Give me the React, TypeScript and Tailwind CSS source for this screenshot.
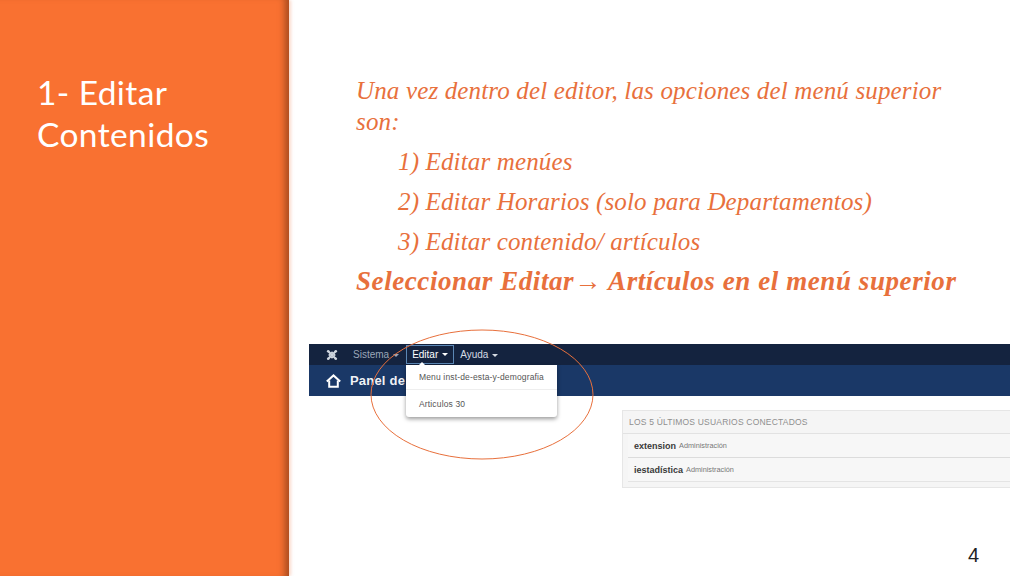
import React from "react";

const serif = "font-['Liberation_Serif',serif] italic text-[#e8703c]";
const ui = "font-['Liberation_Sans',sans-serif]";

function Caret({ cls }: { cls: string }) {
  return <span className={`inline-block w-0 h-0 ml-1 align-middle border-x-[3px] border-x-transparent border-t-[3px] ${cls}`} />;
}

function JoomlaIcon() {
  return (
    <svg width="12" height="12" viewBox="0 0 12 12" fill="none" stroke="#cfd6df" strokeWidth="2">
      <path d="M2.5 2.5 L9.5 9.5 M9.5 2.5 L2.5 9.5" />
      <circle cx="2.2" cy="2.2" r="1.3" fill="#cfd6df" stroke="none" />
      <circle cx="9.8" cy="2.2" r="1.3" fill="#cfd6df" stroke="none" />
      <circle cx="2.2" cy="9.8" r="1.3" fill="#cfd6df" stroke="none" />
      <circle cx="9.8" cy="9.8" r="1.3" fill="#cfd6df" stroke="none" />
      <path d="M3 6 L6 3 L9 6 L6 9 Z" strokeWidth="1.2" />
    </svg>
  );
}

function HomeIcon() {
  return (
    <svg width="15" height="14" viewBox="0 0 15 14" fill="none" stroke="#ffffff" strokeWidth="2">
      <path d="M0.8 7.4 L7.5 1.4 L14.2 7.4" />
      <path d="M3.2 6.5 V12.8 H11.8 V6.5" />
    </svg>
  );
}

function UserRow({ name, last }: { name: string; last?: boolean }) {
  return (
    <div className={`h-6 pt-[2px] flex items-center pl-[6px] ml-[5px] bg-[#f7f7f7] ${last ? "border-b border-[#e4e4e4]" : "border-b border-[#dcdcdc]"}`}>
      <span className="text-[9px] font-bold text-[#3a3a3a]">{name}</span>
      <span className="text-[7.3px] text-[#777] ml-[3px]">Administración</span>
    </div>
  );
}

export default function App() {
  return (
    <div className="w-[1024px] h-[576px] bg-white flex overflow-hidden relative">
      <aside className="w-[289px] shrink-0 h-full bg-[#f97131] shadow-[inset_-9px_0_7px_-5px_rgba(110,50,20,0.6),2px_0_3px_rgba(240,150,110,0.35)] pl-[37px] pt-[71px] z-10">
        <h1 className="font-['Lato',sans-serif] text-[33.5px] leading-[42px] text-white font-normal tracking-[0.4px]">
          1- Editar<br />Contenidos
        </h1>
      </aside>

      <main className="flex-1 min-w-0 pl-[20px] flex flex-col relative">
        <div className={`${serif} pl-[47px] pt-[75px] text-[25px] leading-[31px] tracking-[0.15px]`}>
          <p>Una vez dentro del editor, las opciones del menú superior</p>
          <p>son:</p>
          <p className="pl-[42px] mt-[9px]">1) Editar menúes</p>
          <p className="pl-[42px] mt-[9px]">2) Editar Horarios (solo para Departamentos)</p>
          <p className="pl-[42px] mt-[9px]">3) Editar contenido/ artículos</p>
          <p className="font-bold mt-[9px] text-[27px] tracking-[0.58px]">Seleccionar Editar→ Artículos en el menú superior</p>
        </div>

        <div className={`${ui} w-[701px] mt-[47px] relative`}>
          <div className="h-[21px] bg-[#14233f] flex items-center pl-[17px] text-[10px]">
            <JoomlaIcon />
            <span className="ml-[15px] text-[#9aa6b8]">Sistema<Caret cls="border-t-[#9aa6b8]" /></span>
            <span className="ml-[7px] h-[19px] px-[5px] flex items-center text-white border border-[#5b87b5]">Editar<Caret cls="border-t-white" /></span>
            <span className="ml-[6px] text-[#d5dbe4]">Ayuda<Caret cls="border-t-[#d5dbe4]" /></span>
          </div>
          <div className="h-[31px] bg-[#1a3867] flex items-center pl-[17px]">
            <HomeIcon />
            <span className="ml-[9px] text-[13px] font-bold text-white/95 tracking-[0.2px]">Panel de</span>
          </div>

          <div className="ml-[313px] mt-[14px] h-[78px] bg-[#f5f5f5] border border-[#e6e6e6] border-r-0 flex flex-col">
            <div className="h-[23px] shrink-0 flex items-center pl-[6px] text-[8.5px] text-[#8f8f8f] tracking-[0.2px] border-b border-[#e2e2e2]">LOS 5 ÚLTIMOS USUARIOS CONECTADOS</div>
            <UserRow name="extension" />
            <UserRow name="iestadística" last />
          </div>

          <div className="absolute left-[97px] top-[21px] w-[151px] h-[52px] bg-white rounded-b-[3px] shadow-[0_2px_4px_rgba(0,0,0,0.4)] text-[8.5px] text-[#555] z-10">
            <div className="h-[25px] pl-[13px] flex items-center border-b border-[#eeeeee] tracking-[0.15px]">Menu inst-de-esta-y-demografia</div>
            <div className="h-[27px] pt-[2px] pl-[13px] flex items-center tracking-[0.15px]">Articulos 30</div>
          </div>
          <div className="absolute left-[110px] top-[18px] w-0 h-0 border-x-[3px] border-x-transparent border-b-[3px] border-b-white z-10" />

          <svg className="absolute left-[60px] top-[-15px] z-20 pointer-events-none" width="226" height="134" viewBox="0 0 226 134" fill="none">
            <ellipse cx="113" cy="65.5" rx="111" ry="64.5" stroke="#e8703c" strokeWidth="1" />
          </svg>
        </div>

        <div className="absolute right-[45px] top-[544px] font-['Liberation_Sans',sans-serif] text-[20px] leading-[22px] text-[#222]">4</div>
      </main>
    </div>
  );
}
